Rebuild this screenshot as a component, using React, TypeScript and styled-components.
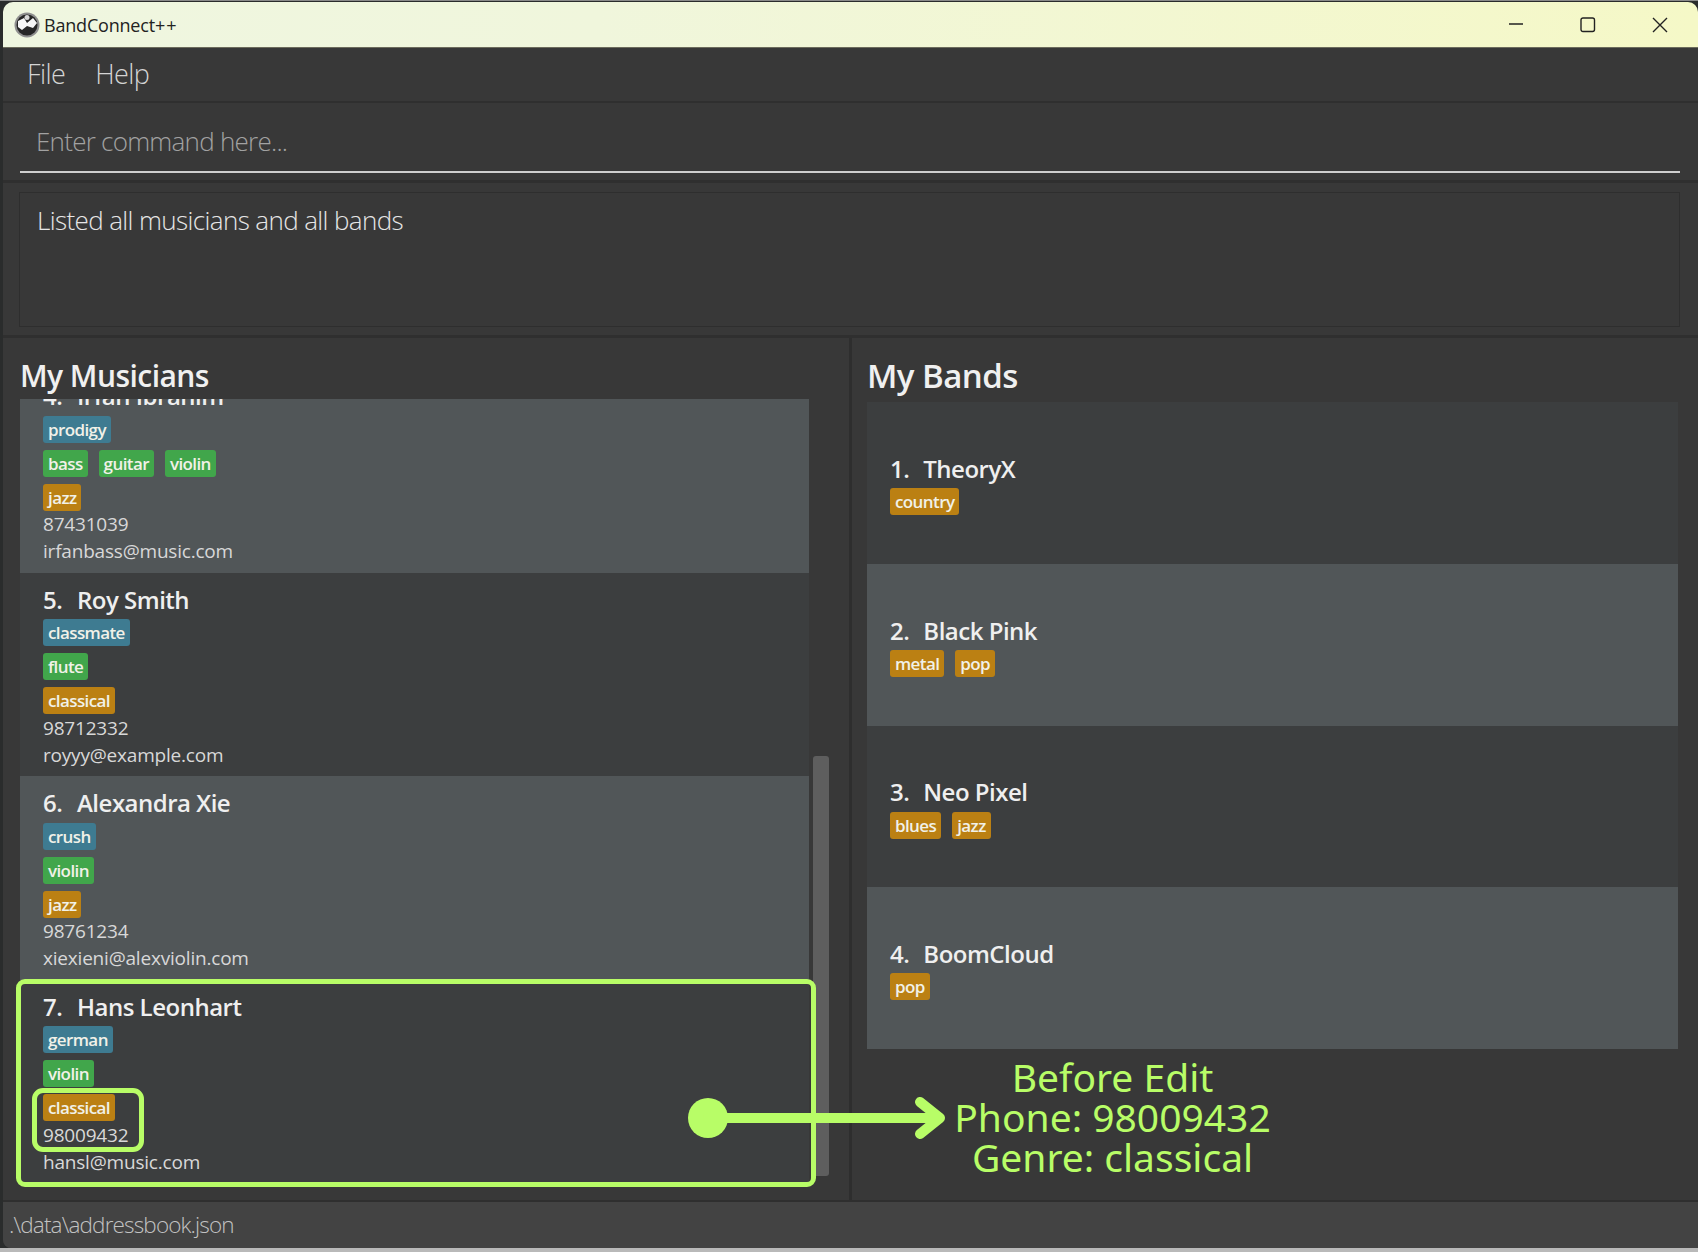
import React from "react";
import styled, { createGlobalStyle } from "styled-components";

type Tone = "blue" | "green" | "orange";

const musicians = [
  {
    index: 4,
    name: "Irfan Ibrahim",
    rows: [["prodigy"], ["bass", "guitar", "violin"], ["jazz"]],
    phone: "87431039",
    email: "irfanbass@music.com",
  },
  {
    index: 5,
    name: "Roy Smith",
    rows: [["classmate"], ["flute"], ["classical"]],
    phone: "98712332",
    email: "royyy@example.com",
  },
  {
    index: 6,
    name: "Alexandra Xie",
    rows: [["crush"], ["violin"], ["jazz"]],
    phone: "98761234",
    email: "xiexieni@alexviolin.com",
  },
  {
    index: 7,
    name: "Hans Leonhart",
    rows: [["german"], ["violin"], ["classical"]],
    phone: "98009432",
    email: "hansl@music.com",
  },
];

const bands = [
  { index: 1, name: "TheoryX", genres: ["country"] },
  { index: 2, name: "Black Pink", genres: ["metal", "pop"] },
  { index: 3, name: "Neo Pixel", genres: ["blues", "jazz"] },
  { index: 4, name: "BoomCloud", genres: ["pop"] },
];

const tones: Tone[] = ["blue", "green", "orange"];

const App = () => {
  return (
    <Page>
      <GlobalStyle />
      <Window>
        <TitleBar>
          <TitleLeft>
            <svg width="26" height="26" viewBox="0 0 26 26">
              <circle cx="13" cy="13" r="12.5" fill="#8f8f8f" />
              <circle cx="13" cy="13" r="10.5" fill="#262626" />
              <path d="M4 9l6-3 3 5 6-5 4 5-4 5-6-2-5 4-4-3z" fill="#f5f5f5" />
              <circle cx="13" cy="5.5" r="2.5" fill="#d8d8d8" />
            </svg>
            <AppName>
              BandConnect<Plus>++</Plus>
            </AppName>
          </TitleLeft>
          <WindowControls>
            <svg width="16" height="16" viewBox="0 0 16 16">
              <path d="M1 7h14" stroke="#222" strokeWidth="1.3" />
            </svg>
            <svg width="16" height="16" viewBox="0 0 16 16">
              <rect x="1" y="1" width="13.5" height="13.5" rx="2" fill="none" stroke="#222" strokeWidth="1.4" />
            </svg>
            <svg width="16" height="16" viewBox="0 0 16 16">
              <path d="M1 1l14 14M15 1L1 15" stroke="#222" strokeWidth="1.4" />
            </svg>
          </WindowControls>
        </TitleBar>

        <MenuBar>
          <MenuItem>File</MenuItem>
          <MenuItem>Help</MenuItem>
        </MenuBar>

        <CommandSection>
          <CommandBox>Enter command here...</CommandBox>
        </CommandSection>

        <ResultSection>
          <ResultBox>Listed all musicians and all bands</ResultBox>
        </ResultSection>

        <Panels>
          <MusicianPanel>
            <PanelTitle $size={30}>My Musicians</PanelTitle>
            <ListRow>
              <MusicianList>
                {musicians.map((m, i) => (
                  <MusicianCell key={m.index} $alt={i % 2 === 0} $first={i === 0}>
                    <CellName>
                      <CellIndex>{m.index}.</CellIndex>
                      {m.name}
                    </CellName>
                    {m.rows.map((row, r) => (
                      <TagRow key={r}>
                        {row.map((t) => (
                          <Tag key={t} $tone={tones[r]}>
                            {t}
                          </Tag>
                        ))}
                      </TagRow>
                    ))}
                    <CellLines>
                      <CellLine>{m.phone}</CellLine>
                      <CellLine>{m.email}</CellLine>
                    </CellLines>
                  </MusicianCell>
                ))}
              </MusicianList>
              <ScrollThumb />
            </ListRow>
          </MusicianPanel>

          <BandPanel>
            <PanelTitle $size={33}>My Bands</PanelTitle>
            <BandList>
              {bands.map((b, i) => (
                <BandCell key={b.index} $alt={i % 2 === 1}>
                  <CellName>
                    <BandIndex>{b.index}.</BandIndex>
                    {b.name}
                  </CellName>
                  <TagRow>
                    {b.genres.map((g) => (
                      <Tag key={g} $tone="orange">
                        {g}
                      </Tag>
                    ))}
                  </TagRow>
                </BandCell>
              ))}
            </BandList>
          </BandPanel>
        </Panels>

        <StatusBar>.\data\addressbook.json</StatusBar>
      </Window>

      {/* annotation drawn over the app */}
      <CellHighlight />
      <FieldHighlight />
      <ArrowMark width="260" height="44" viewBox="0 0 260 44">
        <circle cx="20" cy="22" r="20" fill="#b8fd67" />
        <path d="M20 22h232M232 6l20 16-20 16" fill="none" stroke="#b8fd67" strokeWidth="10" strokeLinecap="round" strokeLinejoin="round" />
      </ArrowMark>
      <Callout>
        Before Edit
        <br />
        Phone: 98009432
        <br />
        Genre: classical
      </Callout>
    </Page>
  );
};

export default App;

const GlobalStyle = createGlobalStyle`
  html, body {
    margin: 0;
    padding: 0;
    background: #2a2c2c;
  }
  body {
    font-family: "Open Sans", "Noto Sans", sans-serif;
  }
`;

const Page = styled.div`
  position: relative;
  width: 1698px;
  height: 1252px;
  overflow: hidden;
  padding: 1px 0 0 3px;
  box-sizing: border-box;
  border-top: 1px solid #8a8a8a;
  border-bottom: 4px solid #b9b9b9;
`;

const Window = styled.div`
  height: 100%;
  display: flex;
  flex-direction: column;
  background: #383838;
  border-radius: 10px 10px 0 8px;
  overflow: hidden;
`;

const TitleBar = styled.div`
  height: 46px;
  flex-shrink: 0;
  display: flex;
  justify-content: space-between;
  align-items: center;
  padding: 0 30px 0 11px;
  background: linear-gradient(90deg, #eff6e0 0%, #f0f6dc 35%, #f5f8c7 100%);
  border-bottom: 1px solid #6c6c5c;
  box-sizing: border-box;
`;

const TitleLeft = styled.div`
  display: flex;
  align-items: center;
  gap: 4px;
`;

const AppName = styled.span`
  font-size: 18px;
  color: #222;
  letter-spacing: -0.2px;
`;

const Plus = styled.span`
  letter-spacing: 1px;
`;

const WindowControls = styled.div`
  display: flex;
  align-items: center;
  gap: 56px;
`;

const MenuBar = styled.div`
  height: 55px;
  flex-shrink: 0;
  display: flex;
  align-items: center;
  gap: 30px;
  padding: 0 0 2px 24px;
  box-sizing: border-box;
  border-bottom: 2px solid #2f2f2f;
`;

const MenuItem = styled.span`
  font-size: 27px;
  font-weight: 300;
  color: #d4d4d4;
  letter-spacing: -0.6px;
`;

const CommandSection = styled.div`
  height: 80px;
  flex-shrink: 0;
  padding: 0 18px 0 17px;
  box-sizing: border-box;
  border-bottom: 3px solid #2f2f2f;
`;

const CommandBox = styled.div`
  height: 70px;
  box-sizing: border-box;
  display: flex;
  align-items: center;
  padding: 7px 0 0 16px;
  font-size: 26px;
  font-weight: 300;
  color: #a2a2a2;
  letter-spacing: -0.75px;
  border-bottom: 2px solid #d0d0d0;
`;

const ResultSection = styled.div`
  height: 155px;
  flex-shrink: 0;
  padding: 9px 18px 8px 16px;
  box-sizing: border-box;
  border-bottom: 3px solid #2f2f2f;
`;

const ResultBox = styled.div`
  height: 100%;
  box-sizing: border-box;
  padding: 8px 0 0 17px;
  font-size: 26px;
  line-height: 38px;
  font-weight: 300;
  color: #e6e6e6;
  letter-spacing: -0.62px;
  border: 1px solid #2e2e2e;
`;

const Panels = styled.div`
  flex: 1;
  min-height: 0;
  display: flex;
  border-bottom: 2px solid #2f2f2f;
`;

const MusicianPanel = styled.div`
  width: 849px;
  flex-shrink: 0;
  padding: 0 0 0 17px;
  box-sizing: border-box;
  display: flex;
  flex-direction: column;
  border-right: 3px solid #2e2e2e;
`;

const BandPanel = styled.div`
  flex: 1;
  min-width: 0;
  padding: 0 20px 0 15px;
  box-sizing: border-box;
  display: flex;
  flex-direction: column;
`;

const PanelTitle = styled.div<{ $size: number }>`
  height: 61px;
  flex-shrink: 0;
  display: flex;
  align-items: flex-end;
  font-size: ${(p) => p.$size}px;
  line-height: 46px;
  font-weight: 600;
  color: #f0f0f0;
  letter-spacing: -0.55px;
`;

const ListRow = styled.div`
  flex: 1;
  min-height: 0;
  display: flex;
  gap: 4px;
`;

const MusicianList = styled.div`
  width: 789px;
  flex-shrink: 0;
  overflow: hidden;
`;

const MusicianCell = styled.div<{ $alt: boolean; $first: boolean }>`
  height: 203.6px;
  box-sizing: border-box;
  margin-top: ${(p) => (p.$first ? "-30px" : "0")};
  padding: 7px 0 0 23px;
  background: ${(p) => (p.$alt ? "#515658" : "#3c3e3f")};
`;

const CellName = styled.div`
  height: 39.5px;
  display: flex;
  align-items: center;
  font-size: 24px;
  font-weight: 600;
  color: #efefef;
  letter-spacing: -0.5px;
`;

const CellIndex = styled.span`
  width: 34px;
  flex-shrink: 0;
`;

const BandIndex = styled.span`
  margin-right: 14px;
`;

const TagRow = styled.div`
  display: flex;
  gap: 11px;
  margin-bottom: 7px;
`;

const toneColor: Record<Tone, string> = {
  blue: "#3e7b91",
  green: "#41a64b",
  orange: "#bb8013",
};

const Tag = styled.span<{ $tone: Tone }>`
  height: 27px;
  display: flex;
  align-items: center;
  padding: 0 5px;
  border-radius: 3px;
  font-size: 17px;
  font-weight: 600;
  color: #f1f1e8;
  letter-spacing: -0.6px;
  background: ${(p) => toneColor[p.$tone]};
`;

const CellLines = styled.div`
  margin-top: -7px;
`;

const CellLine = styled.div`
  height: 27px;
  display: flex;
  align-items: center;
  font-size: 19px;
  color: #d8d8d8;
  letter-spacing: -0.2px;
`;

const ScrollThumb = styled.div`
  width: 16px;
  height: 420px;
  margin-top: 357px;
  flex-shrink: 0;
  background: #5e5e5e;
  border-radius: 3px;
`;

const BandList = styled.div`
  margin-top: 3px;
`;

const BandCell = styled.div<{ $alt: boolean }>`
  height: 161.75px;
  box-sizing: border-box;
  padding: 5px 0 0 23px;
  display: flex;
  flex-direction: column;
  justify-content: center;
  background: ${(p) => (p.$alt ? "#515658" : "#3c3e3f")};
`;

const StatusBar = styled.div`
  height: 46px;
  flex-shrink: 0;
  box-sizing: border-box;
  display: flex;
  align-items: center;
  padding: 0 0 2px 6px;
  background: #434343;
  font-size: 22.5px;
  font-weight: 300;
  color: #c2c2c2;
  letter-spacing: -0.85px;
`;

const CellHighlight = styled.div`
  position: absolute;
  left: 16px;
  top: 978px;
  width: 800px;
  height: 208px;
  box-sizing: border-box;
  border: 5px solid #b8fd67;
  border-radius: 9px;
`;

const FieldHighlight = styled.div`
  position: absolute;
  left: 32px;
  top: 1087px;
  width: 112px;
  height: 64px;
  box-sizing: border-box;
  border: 5px solid #b8fd67;
  border-radius: 11px;
`;

const ArrowMark = styled.svg`
  position: absolute;
  left: 688px;
  top: 1095px;
`;

const Callout = styled.div`
  position: absolute;
  left: 940px;
  top: 1056px;
  width: 345px;
  text-align: center;
  font-family: "Noto Sans", "Open Sans", sans-serif;
  font-size: 39px;
  line-height: 40px;
  color: #b8fd67;
`;
